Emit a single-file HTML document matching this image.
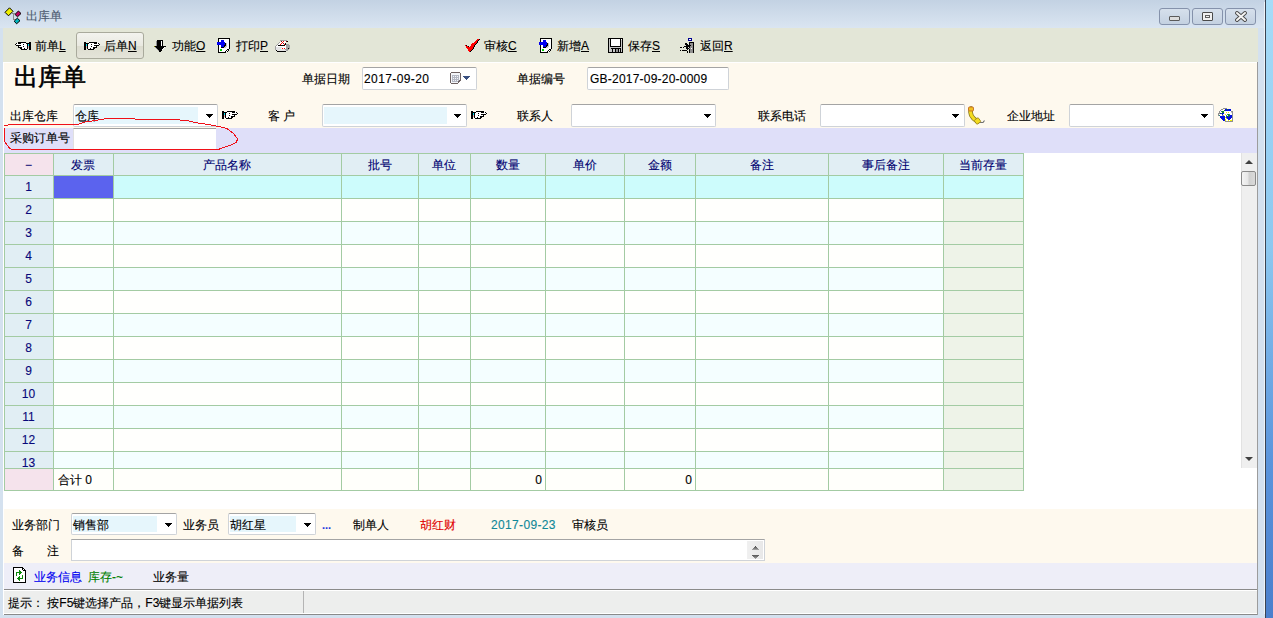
<!DOCTYPE html><html><head><meta charset="utf-8"><style>
*{box-sizing:border-box;margin:0;padding:0}
html,body{width:1273px;height:618px;overflow:hidden}
body{position:relative;font-family:"Liberation Sans",sans-serif;font-size:12px;color:#000;background:#d4e1ef}
.a{position:absolute}
.t{position:absolute;white-space:nowrap;line-height:14px;-webkit-text-stroke:0.12px currentColor}
.u{text-decoration:underline}
.box{position:absolute;background:#fff;border:1px solid #cfd3d8;border-top-color:#a4a4a4;border-radius:2px}
.inner{position:absolute;background:#e6f6fc}
.arr{position:absolute;width:0;height:0;border-left:4px solid transparent;border-right:4px solid transparent;border-top:4px solid #000}
.wb{position:absolute;top:8px;width:31px;height:17px;border:1px solid #8592ab;border-radius:3px;background:linear-gradient(#d6e0ec,#c4d1e1)}
</style></head><body>
<div class="a" style="left:0px;top:0px;width:1265px;height:28px;background:linear-gradient(#c3d2e3,#dae5f1);"></div>
<div class="a" style="left:1265px;top:0px;width:1px;height:618px;background:#3b4452;"></div>
<div class="a" style="left:1264px;top:2px;width:1px;height:612px;background:#eef3f8;"></div>
<div class="a" style="left:1266px;top:0px;width:7px;height:618px;background:linear-gradient(#a6dcf8 0%,#8cc8f0 40%,#5a94dc 75%,#4a7fcc 100%);"></div>
<div class="wb" style="left:1159px"></div>
<div class="wb" style="left:1192px"></div>
<div class="wb" style="left:1225px"></div>
<div class="t" style="left:26px;top:9px;color:#4c5a70">出库单</div>
<div class="a" style="left:3px;top:28px;width:1255px;height:34px;background:#e3e6d7;"></div>
<div class="a" style="left:3px;top:62px;width:1255px;height:66px;background:#fef9ee;"></div>
<div class="a" style="left:3px;top:128px;width:1255px;height:25px;background:#dfdff9;"></div>
<div class="a" style="left:3px;top:153px;width:1255px;height:356px;background:#fff;"></div>
<div class="a" style="left:3px;top:509px;width:1255px;height:54px;background:#fef9ee;"></div>
<div class="a" style="left:3px;top:563px;width:1255px;height:26px;background:#eeeef8;"></div>
<div class="a" style="left:3px;top:589px;width:1255px;height:26px;background:#edeeed;border-top:1px solid #8a8a8a;border-bottom:1px solid #8a8a8a;box-shadow:inset 0 1px 0 #fff,inset 0 -1px 0 #fff"></div>
<div class="a" style="left:303px;top:591px;width:1px;height:22px;background:#b4b4b4;"></div>
<div class="a" style="left:1257px;top:62px;width:1px;height:553px;background:#9c9c9c;"></div>
<div class="a" style="left:3px;top:62px;width:1254px;height:1px;background:#ffffff;"></div>
<div class="a" style="left:3px;top:62px;width:1px;height:553px;background:#ffffff;"></div>
<div class="a" style="left:4px;top:153px;width:49px;height:22px;background:#f5e3ec;"></div>
<div class="a" style="left:53px;top:153px;width:60px;height:22px;background:#e1eef4;"></div>
<div class="a" style="left:113px;top:153px;width:228px;height:22px;background:#e1eef4;"></div>
<div class="a" style="left:341px;top:153px;width:77px;height:22px;background:#e1eef4;"></div>
<div class="a" style="left:418px;top:153px;width:52px;height:22px;background:#e1eef4;"></div>
<div class="a" style="left:470px;top:153px;width:75px;height:22px;background:#e1eef4;"></div>
<div class="a" style="left:545px;top:153px;width:79px;height:22px;background:#e1eef4;"></div>
<div class="a" style="left:624px;top:153px;width:71px;height:22px;background:#e1eef4;"></div>
<div class="a" style="left:695px;top:153px;width:133px;height:22px;background:#e1eef4;"></div>
<div class="a" style="left:828px;top:153px;width:115px;height:22px;background:#e1eef4;"></div>
<div class="a" style="left:943px;top:153px;width:80px;height:22px;background:#e1eef4;"></div>
<div class="a" style="left:4px;top:175px;width:49px;height:23px;background:#e1eef4;"></div>
<div class="a" style="left:53px;top:175px;width:60px;height:23px;background:#5b63ee;"></div>
<div class="a" style="left:113px;top:175px;width:228px;height:23px;background:#cdfcfc;"></div>
<div class="a" style="left:341px;top:175px;width:77px;height:23px;background:#cdfcfc;"></div>
<div class="a" style="left:418px;top:175px;width:52px;height:23px;background:#cdfcfc;"></div>
<div class="a" style="left:470px;top:175px;width:75px;height:23px;background:#cdfcfc;"></div>
<div class="a" style="left:545px;top:175px;width:79px;height:23px;background:#cdfcfc;"></div>
<div class="a" style="left:624px;top:175px;width:71px;height:23px;background:#cdfcfc;"></div>
<div class="a" style="left:695px;top:175px;width:133px;height:23px;background:#cdfcfc;"></div>
<div class="a" style="left:828px;top:175px;width:115px;height:23px;background:#cdfcfc;"></div>
<div class="a" style="left:943px;top:175px;width:80px;height:23px;background:#cdfcfc;"></div>
<div class="a" style="left:4px;top:198px;width:49px;height:23px;background:#e1eef4;"></div>
<div class="a" style="left:53px;top:198px;width:60px;height:23px;background:#fffffd;"></div>
<div class="a" style="left:113px;top:198px;width:228px;height:23px;background:#fffffd;"></div>
<div class="a" style="left:341px;top:198px;width:77px;height:23px;background:#fffffd;"></div>
<div class="a" style="left:418px;top:198px;width:52px;height:23px;background:#fffffd;"></div>
<div class="a" style="left:470px;top:198px;width:75px;height:23px;background:#fffffd;"></div>
<div class="a" style="left:545px;top:198px;width:79px;height:23px;background:#fffffd;"></div>
<div class="a" style="left:624px;top:198px;width:71px;height:23px;background:#fffffd;"></div>
<div class="a" style="left:695px;top:198px;width:133px;height:23px;background:#fffffd;"></div>
<div class="a" style="left:828px;top:198px;width:115px;height:23px;background:#fffffd;"></div>
<div class="a" style="left:943px;top:198px;width:80px;height:23px;background:#eef3e8;"></div>
<div class="a" style="left:4px;top:221px;width:49px;height:23px;background:#e1eef4;"></div>
<div class="a" style="left:53px;top:221px;width:60px;height:23px;background:#f4feff;"></div>
<div class="a" style="left:113px;top:221px;width:228px;height:23px;background:#f4feff;"></div>
<div class="a" style="left:341px;top:221px;width:77px;height:23px;background:#f4feff;"></div>
<div class="a" style="left:418px;top:221px;width:52px;height:23px;background:#f4feff;"></div>
<div class="a" style="left:470px;top:221px;width:75px;height:23px;background:#f4feff;"></div>
<div class="a" style="left:545px;top:221px;width:79px;height:23px;background:#f4feff;"></div>
<div class="a" style="left:624px;top:221px;width:71px;height:23px;background:#f4feff;"></div>
<div class="a" style="left:695px;top:221px;width:133px;height:23px;background:#f4feff;"></div>
<div class="a" style="left:828px;top:221px;width:115px;height:23px;background:#f4feff;"></div>
<div class="a" style="left:943px;top:221px;width:80px;height:23px;background:#eef3e8;"></div>
<div class="a" style="left:4px;top:244px;width:49px;height:23px;background:#e1eef4;"></div>
<div class="a" style="left:53px;top:244px;width:60px;height:23px;background:#fffffd;"></div>
<div class="a" style="left:113px;top:244px;width:228px;height:23px;background:#fffffd;"></div>
<div class="a" style="left:341px;top:244px;width:77px;height:23px;background:#fffffd;"></div>
<div class="a" style="left:418px;top:244px;width:52px;height:23px;background:#fffffd;"></div>
<div class="a" style="left:470px;top:244px;width:75px;height:23px;background:#fffffd;"></div>
<div class="a" style="left:545px;top:244px;width:79px;height:23px;background:#fffffd;"></div>
<div class="a" style="left:624px;top:244px;width:71px;height:23px;background:#fffffd;"></div>
<div class="a" style="left:695px;top:244px;width:133px;height:23px;background:#fffffd;"></div>
<div class="a" style="left:828px;top:244px;width:115px;height:23px;background:#fffffd;"></div>
<div class="a" style="left:943px;top:244px;width:80px;height:23px;background:#eef3e8;"></div>
<div class="a" style="left:4px;top:267px;width:49px;height:23px;background:#e1eef4;"></div>
<div class="a" style="left:53px;top:267px;width:60px;height:23px;background:#f4feff;"></div>
<div class="a" style="left:113px;top:267px;width:228px;height:23px;background:#f4feff;"></div>
<div class="a" style="left:341px;top:267px;width:77px;height:23px;background:#f4feff;"></div>
<div class="a" style="left:418px;top:267px;width:52px;height:23px;background:#f4feff;"></div>
<div class="a" style="left:470px;top:267px;width:75px;height:23px;background:#f4feff;"></div>
<div class="a" style="left:545px;top:267px;width:79px;height:23px;background:#f4feff;"></div>
<div class="a" style="left:624px;top:267px;width:71px;height:23px;background:#f4feff;"></div>
<div class="a" style="left:695px;top:267px;width:133px;height:23px;background:#f4feff;"></div>
<div class="a" style="left:828px;top:267px;width:115px;height:23px;background:#f4feff;"></div>
<div class="a" style="left:943px;top:267px;width:80px;height:23px;background:#eef3e8;"></div>
<div class="a" style="left:4px;top:290px;width:49px;height:23px;background:#e1eef4;"></div>
<div class="a" style="left:53px;top:290px;width:60px;height:23px;background:#fffffd;"></div>
<div class="a" style="left:113px;top:290px;width:228px;height:23px;background:#fffffd;"></div>
<div class="a" style="left:341px;top:290px;width:77px;height:23px;background:#fffffd;"></div>
<div class="a" style="left:418px;top:290px;width:52px;height:23px;background:#fffffd;"></div>
<div class="a" style="left:470px;top:290px;width:75px;height:23px;background:#fffffd;"></div>
<div class="a" style="left:545px;top:290px;width:79px;height:23px;background:#fffffd;"></div>
<div class="a" style="left:624px;top:290px;width:71px;height:23px;background:#fffffd;"></div>
<div class="a" style="left:695px;top:290px;width:133px;height:23px;background:#fffffd;"></div>
<div class="a" style="left:828px;top:290px;width:115px;height:23px;background:#fffffd;"></div>
<div class="a" style="left:943px;top:290px;width:80px;height:23px;background:#eef3e8;"></div>
<div class="a" style="left:4px;top:313px;width:49px;height:23px;background:#e1eef4;"></div>
<div class="a" style="left:53px;top:313px;width:60px;height:23px;background:#f4feff;"></div>
<div class="a" style="left:113px;top:313px;width:228px;height:23px;background:#f4feff;"></div>
<div class="a" style="left:341px;top:313px;width:77px;height:23px;background:#f4feff;"></div>
<div class="a" style="left:418px;top:313px;width:52px;height:23px;background:#f4feff;"></div>
<div class="a" style="left:470px;top:313px;width:75px;height:23px;background:#f4feff;"></div>
<div class="a" style="left:545px;top:313px;width:79px;height:23px;background:#f4feff;"></div>
<div class="a" style="left:624px;top:313px;width:71px;height:23px;background:#f4feff;"></div>
<div class="a" style="left:695px;top:313px;width:133px;height:23px;background:#f4feff;"></div>
<div class="a" style="left:828px;top:313px;width:115px;height:23px;background:#f4feff;"></div>
<div class="a" style="left:943px;top:313px;width:80px;height:23px;background:#eef3e8;"></div>
<div class="a" style="left:4px;top:336px;width:49px;height:23px;background:#e1eef4;"></div>
<div class="a" style="left:53px;top:336px;width:60px;height:23px;background:#fffffd;"></div>
<div class="a" style="left:113px;top:336px;width:228px;height:23px;background:#fffffd;"></div>
<div class="a" style="left:341px;top:336px;width:77px;height:23px;background:#fffffd;"></div>
<div class="a" style="left:418px;top:336px;width:52px;height:23px;background:#fffffd;"></div>
<div class="a" style="left:470px;top:336px;width:75px;height:23px;background:#fffffd;"></div>
<div class="a" style="left:545px;top:336px;width:79px;height:23px;background:#fffffd;"></div>
<div class="a" style="left:624px;top:336px;width:71px;height:23px;background:#fffffd;"></div>
<div class="a" style="left:695px;top:336px;width:133px;height:23px;background:#fffffd;"></div>
<div class="a" style="left:828px;top:336px;width:115px;height:23px;background:#fffffd;"></div>
<div class="a" style="left:943px;top:336px;width:80px;height:23px;background:#eef3e8;"></div>
<div class="a" style="left:4px;top:359px;width:49px;height:23px;background:#e1eef4;"></div>
<div class="a" style="left:53px;top:359px;width:60px;height:23px;background:#f4feff;"></div>
<div class="a" style="left:113px;top:359px;width:228px;height:23px;background:#f4feff;"></div>
<div class="a" style="left:341px;top:359px;width:77px;height:23px;background:#f4feff;"></div>
<div class="a" style="left:418px;top:359px;width:52px;height:23px;background:#f4feff;"></div>
<div class="a" style="left:470px;top:359px;width:75px;height:23px;background:#f4feff;"></div>
<div class="a" style="left:545px;top:359px;width:79px;height:23px;background:#f4feff;"></div>
<div class="a" style="left:624px;top:359px;width:71px;height:23px;background:#f4feff;"></div>
<div class="a" style="left:695px;top:359px;width:133px;height:23px;background:#f4feff;"></div>
<div class="a" style="left:828px;top:359px;width:115px;height:23px;background:#f4feff;"></div>
<div class="a" style="left:943px;top:359px;width:80px;height:23px;background:#eef3e8;"></div>
<div class="a" style="left:4px;top:382px;width:49px;height:23px;background:#e1eef4;"></div>
<div class="a" style="left:53px;top:382px;width:60px;height:23px;background:#fffffd;"></div>
<div class="a" style="left:113px;top:382px;width:228px;height:23px;background:#fffffd;"></div>
<div class="a" style="left:341px;top:382px;width:77px;height:23px;background:#fffffd;"></div>
<div class="a" style="left:418px;top:382px;width:52px;height:23px;background:#fffffd;"></div>
<div class="a" style="left:470px;top:382px;width:75px;height:23px;background:#fffffd;"></div>
<div class="a" style="left:545px;top:382px;width:79px;height:23px;background:#fffffd;"></div>
<div class="a" style="left:624px;top:382px;width:71px;height:23px;background:#fffffd;"></div>
<div class="a" style="left:695px;top:382px;width:133px;height:23px;background:#fffffd;"></div>
<div class="a" style="left:828px;top:382px;width:115px;height:23px;background:#fffffd;"></div>
<div class="a" style="left:943px;top:382px;width:80px;height:23px;background:#eef3e8;"></div>
<div class="a" style="left:4px;top:405px;width:49px;height:23px;background:#e1eef4;"></div>
<div class="a" style="left:53px;top:405px;width:60px;height:23px;background:#f4feff;"></div>
<div class="a" style="left:113px;top:405px;width:228px;height:23px;background:#f4feff;"></div>
<div class="a" style="left:341px;top:405px;width:77px;height:23px;background:#f4feff;"></div>
<div class="a" style="left:418px;top:405px;width:52px;height:23px;background:#f4feff;"></div>
<div class="a" style="left:470px;top:405px;width:75px;height:23px;background:#f4feff;"></div>
<div class="a" style="left:545px;top:405px;width:79px;height:23px;background:#f4feff;"></div>
<div class="a" style="left:624px;top:405px;width:71px;height:23px;background:#f4feff;"></div>
<div class="a" style="left:695px;top:405px;width:133px;height:23px;background:#f4feff;"></div>
<div class="a" style="left:828px;top:405px;width:115px;height:23px;background:#f4feff;"></div>
<div class="a" style="left:943px;top:405px;width:80px;height:23px;background:#eef3e8;"></div>
<div class="a" style="left:4px;top:428px;width:49px;height:23px;background:#e1eef4;"></div>
<div class="a" style="left:53px;top:428px;width:60px;height:23px;background:#fffffd;"></div>
<div class="a" style="left:113px;top:428px;width:228px;height:23px;background:#fffffd;"></div>
<div class="a" style="left:341px;top:428px;width:77px;height:23px;background:#fffffd;"></div>
<div class="a" style="left:418px;top:428px;width:52px;height:23px;background:#fffffd;"></div>
<div class="a" style="left:470px;top:428px;width:75px;height:23px;background:#fffffd;"></div>
<div class="a" style="left:545px;top:428px;width:79px;height:23px;background:#fffffd;"></div>
<div class="a" style="left:624px;top:428px;width:71px;height:23px;background:#fffffd;"></div>
<div class="a" style="left:695px;top:428px;width:133px;height:23px;background:#fffffd;"></div>
<div class="a" style="left:828px;top:428px;width:115px;height:23px;background:#fffffd;"></div>
<div class="a" style="left:943px;top:428px;width:80px;height:23px;background:#eef3e8;"></div>
<div class="a" style="left:4px;top:451px;width:49px;height:17px;background:#e1eef4;"></div>
<div class="a" style="left:53px;top:451px;width:60px;height:17px;background:#f4feff;"></div>
<div class="a" style="left:113px;top:451px;width:228px;height:17px;background:#f4feff;"></div>
<div class="a" style="left:341px;top:451px;width:77px;height:17px;background:#f4feff;"></div>
<div class="a" style="left:418px;top:451px;width:52px;height:17px;background:#f4feff;"></div>
<div class="a" style="left:470px;top:451px;width:75px;height:17px;background:#f4feff;"></div>
<div class="a" style="left:545px;top:451px;width:79px;height:17px;background:#f4feff;"></div>
<div class="a" style="left:624px;top:451px;width:71px;height:17px;background:#f4feff;"></div>
<div class="a" style="left:695px;top:451px;width:133px;height:17px;background:#f4feff;"></div>
<div class="a" style="left:828px;top:451px;width:115px;height:17px;background:#f4feff;"></div>
<div class="a" style="left:943px;top:451px;width:80px;height:17px;background:#eef3e8;"></div>
<div class="a" style="left:4px;top:468px;width:49px;height:22px;background:#f5e3ec;"></div>
<div class="a" style="left:53px;top:468px;width:60px;height:22px;background:#fffffb;"></div>
<div class="a" style="left:113px;top:468px;width:228px;height:22px;background:#fffffb;"></div>
<div class="a" style="left:341px;top:468px;width:77px;height:22px;background:#fffffb;"></div>
<div class="a" style="left:418px;top:468px;width:52px;height:22px;background:#fffffb;"></div>
<div class="a" style="left:470px;top:468px;width:75px;height:22px;background:#fffffb;"></div>
<div class="a" style="left:545px;top:468px;width:79px;height:22px;background:#fffffb;"></div>
<div class="a" style="left:624px;top:468px;width:71px;height:22px;background:#fffffb;"></div>
<div class="a" style="left:695px;top:468px;width:133px;height:22px;background:#fffffb;"></div>
<div class="a" style="left:828px;top:468px;width:115px;height:22px;background:#fffffb;"></div>
<div class="a" style="left:943px;top:468px;width:80px;height:22px;background:#eef3e8;"></div>
<div class="a" style="left:4px;top:153px;width:1px;height:338px;background:#a3cba3;"></div>
<div class="a" style="left:53px;top:153px;width:1px;height:338px;background:#a3cba3;"></div>
<div class="a" style="left:113px;top:153px;width:1px;height:338px;background:#a3cba3;"></div>
<div class="a" style="left:341px;top:153px;width:1px;height:338px;background:#a3cba3;"></div>
<div class="a" style="left:418px;top:153px;width:1px;height:338px;background:#a3cba3;"></div>
<div class="a" style="left:470px;top:153px;width:1px;height:338px;background:#a3cba3;"></div>
<div class="a" style="left:545px;top:153px;width:1px;height:338px;background:#a3cba3;"></div>
<div class="a" style="left:624px;top:153px;width:1px;height:338px;background:#a3cba3;"></div>
<div class="a" style="left:695px;top:153px;width:1px;height:338px;background:#a3cba3;"></div>
<div class="a" style="left:828px;top:153px;width:1px;height:338px;background:#a3cba3;"></div>
<div class="a" style="left:943px;top:153px;width:1px;height:338px;background:#a3cba3;"></div>
<div class="a" style="left:1023px;top:153px;width:1px;height:338px;background:#a3cba3;"></div>
<div class="a" style="left:4px;top:153px;width:1020px;height:1px;background:#a3cba3;"></div>
<div class="a" style="left:4px;top:175px;width:1020px;height:1px;background:#a3cba3;"></div>
<div class="a" style="left:4px;top:198px;width:1020px;height:1px;background:#a3cba3;"></div>
<div class="a" style="left:4px;top:221px;width:1020px;height:1px;background:#a3cba3;"></div>
<div class="a" style="left:4px;top:244px;width:1020px;height:1px;background:#a3cba3;"></div>
<div class="a" style="left:4px;top:267px;width:1020px;height:1px;background:#a3cba3;"></div>
<div class="a" style="left:4px;top:290px;width:1020px;height:1px;background:#a3cba3;"></div>
<div class="a" style="left:4px;top:313px;width:1020px;height:1px;background:#a3cba3;"></div>
<div class="a" style="left:4px;top:336px;width:1020px;height:1px;background:#a3cba3;"></div>
<div class="a" style="left:4px;top:359px;width:1020px;height:1px;background:#a3cba3;"></div>
<div class="a" style="left:4px;top:382px;width:1020px;height:1px;background:#a3cba3;"></div>
<div class="a" style="left:4px;top:405px;width:1020px;height:1px;background:#a3cba3;"></div>
<div class="a" style="left:4px;top:428px;width:1020px;height:1px;background:#a3cba3;"></div>
<div class="a" style="left:4px;top:451px;width:1020px;height:1px;background:#a3cba3;"></div>
<div class="a" style="left:4px;top:468px;width:1020px;height:1px;background:#a3cba3;"></div>
<div class="a" style="left:4px;top:490px;width:1020px;height:1px;background:#a3cba3;"></div>
<div class="t" style="left:4px;top:158px;width:49px;text-align:center;color:#000070">−</div>
<div class="t" style="left:53px;top:158px;width:60px;text-align:center;color:#000070">发票</div>
<div class="t" style="left:113px;top:158px;width:228px;text-align:center;color:#000070">产品名称</div>
<div class="t" style="left:341px;top:158px;width:77px;text-align:center;color:#000070">批号</div>
<div class="t" style="left:418px;top:158px;width:52px;text-align:center;color:#000070">单位</div>
<div class="t" style="left:470px;top:158px;width:75px;text-align:center;color:#000070">数量</div>
<div class="t" style="left:545px;top:158px;width:79px;text-align:center;color:#000070">单价</div>
<div class="t" style="left:624px;top:158px;width:71px;text-align:center;color:#000070">金额</div>
<div class="t" style="left:695px;top:158px;width:133px;text-align:center;color:#000070">备注</div>
<div class="t" style="left:828px;top:158px;width:115px;text-align:center;color:#000070">事后备注</div>
<div class="t" style="left:943px;top:158px;width:80px;text-align:center;color:#000070">当前存量</div>
<div class="t" style="left:4px;top:180px;width:49px;text-align:center;color:#08087a">1</div>
<div class="t" style="left:4px;top:203px;width:49px;text-align:center;color:#08087a">2</div>
<div class="t" style="left:4px;top:226px;width:49px;text-align:center;color:#08087a">3</div>
<div class="t" style="left:4px;top:249px;width:49px;text-align:center;color:#08087a">4</div>
<div class="t" style="left:4px;top:272px;width:49px;text-align:center;color:#08087a">5</div>
<div class="t" style="left:4px;top:295px;width:49px;text-align:center;color:#08087a">6</div>
<div class="t" style="left:4px;top:318px;width:49px;text-align:center;color:#08087a">7</div>
<div class="t" style="left:4px;top:341px;width:49px;text-align:center;color:#08087a">8</div>
<div class="t" style="left:4px;top:364px;width:49px;text-align:center;color:#08087a">9</div>
<div class="t" style="left:4px;top:387px;width:49px;text-align:center;color:#08087a">10</div>
<div class="t" style="left:4px;top:410px;width:49px;text-align:center;color:#08087a">11</div>
<div class="t" style="left:4px;top:433px;width:49px;text-align:center;color:#08087a">12</div>
<div class="t" style="left:4px;top:456px;width:49px;text-align:center;color:#08087a">13</div>
<div class="t" style="left:58px;top:473px;">合计 0</div>
<div class="t" style="left:470px;top:473px;width:72px;text-align:right">0</div>
<div class="t" style="left:624px;top:473px;width:68px;text-align:right">0</div>
<div class="a" style="left:76px;top:32px;width:68px;height:27px;border:1px solid #a9aa9c;border-radius:3px;background:linear-gradient(#f3f3ee 0%,#e9e9e1 50%,#dcdccf 51%,#e4e4d9 100%)"></div>
<svg class="a" style="left:15px;top:42px;" width="16" height="8" viewBox="0 0 16 8" shape-rendering="crispEdges"><rect x="3" y="0" width="8" height="1" fill="#000"/><rect x="14" y="0" width="2" height="1" fill="#000"/><rect x="1" y="1" width="1" height="1" fill="#000"/><rect x="2" y="1" width="1" height="1" fill="#fff"/><rect x="3" y="1" width="3" height="1" fill="#000"/><rect x="6" y="1" width="5" height="1" fill="#fff"/><rect x="11" y="1" width="5" height="1" fill="#000"/><rect x="0" y="2" width="1" height="1" fill="#000"/><rect x="1" y="2" width="7" height="1" fill="#fff"/><rect x="8" y="2" width="1" height="1" fill="#000"/><rect x="9" y="2" width="3" height="1" fill="#fff"/><rect x="12" y="2" width="1" height="1" fill="#000"/><rect x="13" y="2" width="1" height="1" fill="#00e0f0"/><rect x="14" y="2" width="2" height="1" fill="#000"/><rect x="1" y="3" width="5" height="1" fill="#000"/><rect x="6" y="3" width="6" height="1" fill="#fff"/><rect x="12" y="3" width="1" height="1" fill="#000"/><rect x="13" y="3" width="1" height="1" fill="#00e0f0"/><rect x="14" y="3" width="2" height="1" fill="#000"/><rect x="3" y="4" width="1" height="1" fill="#000"/><rect x="4" y="4" width="4" height="1" fill="#fff"/><rect x="8" y="4" width="1" height="1" fill="#000"/><rect x="9" y="4" width="3" height="1" fill="#fff"/><rect x="12" y="4" width="1" height="1" fill="#000"/><rect x="13" y="4" width="1" height="1" fill="#e0b0b0"/><rect x="14" y="4" width="2" height="1" fill="#000"/><rect x="3" y="5" width="4" height="1" fill="#000"/><rect x="7" y="5" width="5" height="1" fill="#fff"/><rect x="12" y="5" width="1" height="1" fill="#000"/><rect x="13" y="5" width="1" height="1" fill="#e0b0b0"/><rect x="14" y="5" width="2" height="1" fill="#000"/><rect x="5" y="6" width="2" height="1" fill="#000"/><rect x="7" y="6" width="2" height="1" fill="#fff"/><rect x="9" y="6" width="1" height="1" fill="#000"/><rect x="10" y="6" width="2" height="1" fill="#fff"/><rect x="12" y="6" width="1" height="1" fill="#000"/><rect x="14" y="6" width="2" height="1" fill="#000"/><rect x="6" y="7" width="6" height="1" fill="#000"/><rect x="14" y="7" width="2" height="1" fill="#000"/></svg>
<svg class="a" style="left:84px;top:42px;" width="16" height="8" viewBox="0 0 16 8" shape-rendering="crispEdges"><rect x="0" y="0" width="2" height="1" fill="#000"/><rect x="5" y="0" width="8" height="1" fill="#000"/><rect x="0" y="1" width="5" height="1" fill="#000"/><rect x="5" y="1" width="5" height="1" fill="#fff"/><rect x="10" y="1" width="3" height="1" fill="#000"/><rect x="13" y="1" width="1" height="1" fill="#fff"/><rect x="14" y="1" width="1" height="1" fill="#000"/><rect x="0" y="2" width="2" height="1" fill="#000"/><rect x="2" y="2" width="1" height="1" fill="#00e0f0"/><rect x="3" y="2" width="1" height="1" fill="#000"/><rect x="4" y="2" width="3" height="1" fill="#fff"/><rect x="7" y="2" width="1" height="1" fill="#000"/><rect x="8" y="2" width="7" height="1" fill="#fff"/><rect x="15" y="2" width="1" height="1" fill="#000"/><rect x="0" y="3" width="2" height="1" fill="#000"/><rect x="2" y="3" width="1" height="1" fill="#00e0f0"/><rect x="3" y="3" width="1" height="1" fill="#000"/><rect x="4" y="3" width="6" height="1" fill="#fff"/><rect x="10" y="3" width="5" height="1" fill="#000"/><rect x="0" y="4" width="2" height="1" fill="#000"/><rect x="2" y="4" width="1" height="1" fill="#e0b0b0"/><rect x="3" y="4" width="1" height="1" fill="#000"/><rect x="4" y="4" width="3" height="1" fill="#fff"/><rect x="7" y="4" width="1" height="1" fill="#000"/><rect x="8" y="4" width="4" height="1" fill="#fff"/><rect x="12" y="4" width="1" height="1" fill="#000"/><rect x="0" y="5" width="2" height="1" fill="#000"/><rect x="2" y="5" width="1" height="1" fill="#e0b0b0"/><rect x="3" y="5" width="1" height="1" fill="#000"/><rect x="4" y="5" width="5" height="1" fill="#fff"/><rect x="9" y="5" width="4" height="1" fill="#000"/><rect x="0" y="6" width="2" height="1" fill="#000"/><rect x="3" y="6" width="1" height="1" fill="#000"/><rect x="4" y="6" width="2" height="1" fill="#fff"/><rect x="6" y="6" width="1" height="1" fill="#000"/><rect x="7" y="6" width="2" height="1" fill="#fff"/><rect x="9" y="6" width="2" height="1" fill="#000"/><rect x="0" y="7" width="2" height="1" fill="#000"/><rect x="4" y="7" width="6" height="1" fill="#000"/></svg>
<svg class="a" style="left:154px;top:40px;" width="12" height="12" viewBox="0 0 12 12" shape-rendering="crispEdges"><rect x="3" y="0" width="6" height="1" fill="#000"/><rect x="2" y="1" width="1" height="1" fill="#909090"/><rect x="3" y="1" width="4" height="1" fill="#000"/><rect x="7" y="1" width="1" height="1" fill="#fff"/><rect x="8" y="1" width="1" height="1" fill="#000"/><rect x="2" y="2" width="1" height="1" fill="#909090"/><rect x="3" y="2" width="4" height="1" fill="#000"/><rect x="7" y="2" width="1" height="1" fill="#fff"/><rect x="8" y="2" width="1" height="1" fill="#000"/><rect x="2" y="3" width="1" height="1" fill="#909090"/><rect x="3" y="3" width="4" height="1" fill="#000"/><rect x="7" y="3" width="1" height="1" fill="#fff"/><rect x="8" y="3" width="1" height="1" fill="#000"/><rect x="2" y="4" width="1" height="1" fill="#909090"/><rect x="3" y="4" width="4" height="1" fill="#000"/><rect x="7" y="4" width="1" height="1" fill="#fff"/><rect x="8" y="4" width="1" height="1" fill="#000"/><rect x="2" y="5" width="1" height="1" fill="#909090"/><rect x="3" y="5" width="4" height="1" fill="#000"/><rect x="7" y="5" width="1" height="1" fill="#fff"/><rect x="8" y="5" width="1" height="1" fill="#000"/><rect x="0" y="6" width="1" height="1" fill="#808000"/><rect x="1" y="6" width="11" height="1" fill="#000"/><rect x="1" y="7" width="1" height="1" fill="#909090"/><rect x="2" y="7" width="8" height="1" fill="#000"/><rect x="10" y="7" width="1" height="1" fill="#fff"/><rect x="2" y="8" width="1" height="1" fill="#909090"/><rect x="3" y="8" width="6" height="1" fill="#000"/><rect x="9" y="8" width="1" height="1" fill="#fff"/><rect x="3" y="9" width="1" height="1" fill="#909090"/><rect x="4" y="9" width="4" height="1" fill="#000"/><rect x="8" y="9" width="1" height="1" fill="#fff"/><rect x="4" y="10" width="1" height="1" fill="#909090"/><rect x="5" y="10" width="3" height="1" fill="#000"/><rect x="5" y="11" width="2" height="1" fill="#000"/></svg>
<svg class="a" style="left:216px;top:38px;" width="14" height="15" viewBox="0 0 14 15" shape-rendering="crispEdges"><rect x="2" y="0" width="12" height="1" fill="#000"/><rect x="2" y="1" width="1" height="1" fill="#000"/><rect x="3" y="1" width="10" height="1" fill="#fff"/><rect x="13" y="1" width="1" height="1" fill="#000"/><rect x="2" y="2" width="1" height="1" fill="#000"/><rect x="3" y="2" width="2" height="1" fill="#fff"/><rect x="5" y="2" width="3" height="1" fill="#0000f0"/><rect x="8" y="2" width="5" height="1" fill="#fff"/><rect x="13" y="2" width="1" height="1" fill="#000"/><rect x="2" y="3" width="1" height="1" fill="#000"/><rect x="3" y="3" width="2" height="1" fill="#fff"/><rect x="5" y="3" width="3" height="1" fill="#0000f0"/><rect x="8" y="3" width="5" height="1" fill="#fff"/><rect x="13" y="3" width="1" height="1" fill="#000"/><rect x="1" y="4" width="8" height="1" fill="#0000f0"/><rect x="9" y="4" width="4" height="1" fill="#fff"/><rect x="13" y="4" width="1" height="1" fill="#000"/><rect x="1" y="5" width="8" height="1" fill="#0000f0"/><rect x="9" y="5" width="1" height="1" fill="#000"/><rect x="10" y="5" width="1" height="1" fill="#c8c8c8"/><rect x="11" y="5" width="2" height="1" fill="#fff"/><rect x="13" y="5" width="1" height="1" fill="#000"/><rect x="1" y="6" width="8" height="1" fill="#0000f0"/><rect x="9" y="6" width="1" height="1" fill="#000"/><rect x="10" y="6" width="1" height="1" fill="#c8c8c8"/><rect x="11" y="6" width="2" height="1" fill="#fff"/><rect x="13" y="6" width="1" height="1" fill="#000"/><rect x="2" y="7" width="1" height="1" fill="#000"/><rect x="3" y="7" width="2" height="1" fill="#fff"/><rect x="5" y="7" width="3" height="1" fill="#0000f0"/><rect x="8" y="7" width="2" height="1" fill="#000"/><rect x="10" y="7" width="1" height="1" fill="#c8c8c8"/><rect x="11" y="7" width="2" height="1" fill="#fff"/><rect x="13" y="7" width="1" height="1" fill="#000"/><rect x="2" y="8" width="1" height="1" fill="#000"/><rect x="3" y="8" width="2" height="1" fill="#fff"/><rect x="5" y="8" width="3" height="1" fill="#0000f0"/><rect x="8" y="8" width="1" height="1" fill="#000"/><rect x="9" y="8" width="2" height="1" fill="#c8c8c8"/><rect x="11" y="8" width="2" height="1" fill="#fff"/><rect x="13" y="8" width="1" height="1" fill="#000"/><rect x="2" y="9" width="1" height="1" fill="#000"/><rect x="3" y="9" width="2" height="1" fill="#fff"/><rect x="5" y="9" width="3" height="1" fill="#000"/><rect x="8" y="9" width="2" height="1" fill="#c8c8c8"/><rect x="10" y="9" width="3" height="1" fill="#fff"/><rect x="13" y="9" width="1" height="1" fill="#000"/><rect x="2" y="10" width="1" height="1" fill="#000"/><rect x="3" y="10" width="10" height="1" fill="#fff"/><rect x="13" y="10" width="1" height="1" fill="#000"/><rect x="2" y="11" width="1" height="1" fill="#000"/><rect x="3" y="11" width="1" height="1" fill="#fff"/><rect x="4" y="11" width="2" height="1" fill="#00d000"/><rect x="6" y="11" width="5" height="1" fill="#fff"/><rect x="11" y="11" width="2" height="1" fill="#000"/><rect x="2" y="12" width="1" height="1" fill="#000"/><rect x="3" y="12" width="1" height="1" fill="#fff"/><rect x="4" y="12" width="2" height="1" fill="#00d000"/><rect x="6" y="12" width="4" height="1" fill="#fff"/><rect x="10" y="12" width="1" height="1" fill="#000"/><rect x="11" y="12" width="1" height="1" fill="#fff"/><rect x="12" y="12" width="1" height="1" fill="#000"/><rect x="2" y="13" width="1" height="1" fill="#000"/><rect x="3" y="13" width="6" height="1" fill="#fff"/><rect x="9" y="13" width="1" height="1" fill="#000"/><rect x="10" y="13" width="1" height="1" fill="#fff"/><rect x="11" y="13" width="1" height="1" fill="#000"/><rect x="2" y="14" width="8" height="1" fill="#000"/></svg>
<svg class="a" style="left:538px;top:38px;" width="14" height="15" viewBox="0 0 14 15" shape-rendering="crispEdges"><rect x="2" y="0" width="12" height="1" fill="#000"/><rect x="2" y="1" width="1" height="1" fill="#000"/><rect x="3" y="1" width="10" height="1" fill="#fff"/><rect x="13" y="1" width="1" height="1" fill="#000"/><rect x="2" y="2" width="1" height="1" fill="#000"/><rect x="3" y="2" width="2" height="1" fill="#fff"/><rect x="5" y="2" width="3" height="1" fill="#0000f0"/><rect x="8" y="2" width="5" height="1" fill="#fff"/><rect x="13" y="2" width="1" height="1" fill="#000"/><rect x="2" y="3" width="1" height="1" fill="#000"/><rect x="3" y="3" width="2" height="1" fill="#fff"/><rect x="5" y="3" width="3" height="1" fill="#0000f0"/><rect x="8" y="3" width="5" height="1" fill="#fff"/><rect x="13" y="3" width="1" height="1" fill="#000"/><rect x="1" y="4" width="8" height="1" fill="#0000f0"/><rect x="9" y="4" width="4" height="1" fill="#fff"/><rect x="13" y="4" width="1" height="1" fill="#000"/><rect x="1" y="5" width="8" height="1" fill="#0000f0"/><rect x="9" y="5" width="1" height="1" fill="#000"/><rect x="10" y="5" width="1" height="1" fill="#c8c8c8"/><rect x="11" y="5" width="2" height="1" fill="#fff"/><rect x="13" y="5" width="1" height="1" fill="#000"/><rect x="1" y="6" width="8" height="1" fill="#0000f0"/><rect x="9" y="6" width="1" height="1" fill="#000"/><rect x="10" y="6" width="1" height="1" fill="#c8c8c8"/><rect x="11" y="6" width="2" height="1" fill="#fff"/><rect x="13" y="6" width="1" height="1" fill="#000"/><rect x="2" y="7" width="1" height="1" fill="#000"/><rect x="3" y="7" width="2" height="1" fill="#fff"/><rect x="5" y="7" width="3" height="1" fill="#0000f0"/><rect x="8" y="7" width="2" height="1" fill="#000"/><rect x="10" y="7" width="1" height="1" fill="#c8c8c8"/><rect x="11" y="7" width="2" height="1" fill="#fff"/><rect x="13" y="7" width="1" height="1" fill="#000"/><rect x="2" y="8" width="1" height="1" fill="#000"/><rect x="3" y="8" width="2" height="1" fill="#fff"/><rect x="5" y="8" width="3" height="1" fill="#0000f0"/><rect x="8" y="8" width="1" height="1" fill="#000"/><rect x="9" y="8" width="2" height="1" fill="#c8c8c8"/><rect x="11" y="8" width="2" height="1" fill="#fff"/><rect x="13" y="8" width="1" height="1" fill="#000"/><rect x="2" y="9" width="1" height="1" fill="#000"/><rect x="3" y="9" width="2" height="1" fill="#fff"/><rect x="5" y="9" width="3" height="1" fill="#000"/><rect x="8" y="9" width="2" height="1" fill="#c8c8c8"/><rect x="10" y="9" width="3" height="1" fill="#fff"/><rect x="13" y="9" width="1" height="1" fill="#000"/><rect x="2" y="10" width="1" height="1" fill="#000"/><rect x="3" y="10" width="10" height="1" fill="#fff"/><rect x="13" y="10" width="1" height="1" fill="#000"/><rect x="2" y="11" width="1" height="1" fill="#000"/><rect x="3" y="11" width="1" height="1" fill="#fff"/><rect x="4" y="11" width="2" height="1" fill="#00d000"/><rect x="6" y="11" width="5" height="1" fill="#fff"/><rect x="11" y="11" width="2" height="1" fill="#000"/><rect x="2" y="12" width="1" height="1" fill="#000"/><rect x="3" y="12" width="1" height="1" fill="#fff"/><rect x="4" y="12" width="2" height="1" fill="#00d000"/><rect x="6" y="12" width="4" height="1" fill="#fff"/><rect x="10" y="12" width="1" height="1" fill="#000"/><rect x="11" y="12" width="1" height="1" fill="#fff"/><rect x="12" y="12" width="1" height="1" fill="#000"/><rect x="2" y="13" width="1" height="1" fill="#000"/><rect x="3" y="13" width="6" height="1" fill="#fff"/><rect x="9" y="13" width="1" height="1" fill="#000"/><rect x="10" y="13" width="1" height="1" fill="#fff"/><rect x="11" y="13" width="1" height="1" fill="#000"/><rect x="2" y="14" width="8" height="1" fill="#000"/></svg>
<svg class="a" style="left:275px;top:40px;" width="15" height="12" viewBox="0 0 15 12" shape-rendering="crispEdges"><rect x="5" y="0" width="7" height="1" fill="#a0a0a0"/><rect x="6" y="1" width="1" height="1" fill="#800000"/><rect x="7" y="1" width="1" height="1" fill="#fff"/><rect x="8" y="1" width="1" height="1" fill="#f00"/><rect x="9" y="1" width="2" height="1" fill="#fff"/><rect x="11" y="1" width="1" height="1" fill="#800000"/><rect x="12" y="1" width="1" height="1" fill="#000"/><rect x="4" y="2" width="1" height="1" fill="#a0a0a0"/><rect x="5" y="2" width="2" height="1" fill="#fff"/><rect x="7" y="2" width="1" height="1" fill="#f00"/><rect x="8" y="2" width="3" height="1" fill="#fff"/><rect x="3" y="3" width="1" height="1" fill="#a0a0a0"/><rect x="4" y="3" width="2" height="1" fill="#fff"/><rect x="6" y="3" width="1" height="1" fill="#f00"/><rect x="7" y="3" width="1" height="1" fill="#fff"/><rect x="8" y="3" width="1" height="1" fill="#800000"/><rect x="9" y="3" width="1" height="1" fill="#fff"/><rect x="10" y="3" width="1" height="1" fill="#000"/><rect x="2" y="4" width="1" height="1" fill="#a0a0a0"/><rect x="3" y="4" width="2" height="1" fill="#fff"/><rect x="5" y="4" width="1" height="1" fill="#f00"/><rect x="6" y="4" width="3" height="1" fill="#fff"/><rect x="9" y="4" width="1" height="1" fill="#f00"/><rect x="10" y="4" width="1" height="1" fill="#000"/><rect x="11" y="4" width="3" height="1" fill="#a0a0a0"/><rect x="1" y="5" width="1" height="1" fill="#a0a0a0"/><rect x="2" y="5" width="1" height="1" fill="#fff"/><rect x="3" y="5" width="7" height="1" fill="#000"/><rect x="10" y="5" width="1" height="1" fill="#fff"/><rect x="11" y="5" width="4" height="1" fill="#a0a0a0"/><rect x="0" y="6" width="1" height="1" fill="#a0a0a0"/><rect x="1" y="6" width="10" height="1" fill="#fff"/><rect x="11" y="6" width="4" height="1" fill="#a0a0a0"/><rect x="0" y="7" width="1" height="1" fill="#a0a0a0"/><rect x="1" y="7" width="6" height="1" fill="#e4e4e4"/><rect x="7" y="7" width="4" height="1" fill="#fff"/><rect x="11" y="7" width="4" height="1" fill="#a0a0a0"/><rect x="0" y="8" width="1" height="1" fill="#a0a0a0"/><rect x="1" y="8" width="5" height="1" fill="#e4e4e4"/><rect x="6" y="8" width="1" height="1" fill="#fff"/><rect x="7" y="8" width="1" height="1" fill="#f00"/><rect x="8" y="8" width="1" height="1" fill="#fff"/><rect x="9" y="8" width="1" height="1" fill="#f00"/><rect x="10" y="8" width="1" height="1" fill="#fff"/><rect x="11" y="8" width="2" height="1" fill="#a0a0a0"/><rect x="13" y="8" width="1" height="1" fill="#000"/><rect x="14" y="8" width="1" height="1" fill="#a0a0a0"/><rect x="0" y="9" width="1" height="1" fill="#a0a0a0"/><rect x="1" y="9" width="9" height="1" fill="#e4e4e4"/><rect x="10" y="9" width="4" height="1" fill="#a0a0a0"/><rect x="1" y="10" width="1" height="1" fill="#000"/><rect x="2" y="10" width="9" height="1" fill="#e4e4e4"/><rect x="11" y="10" width="2" height="1" fill="#a0a0a0"/><rect x="2" y="11" width="9" height="1" fill="#000"/></svg>
<svg class="a" style="left:464px;top:39px;" width="16" height="13" viewBox="0 0 16 13" shape-rendering="crispEdges"><rect x="13" y="0" width="2" height="1" fill="#ff0000"/><rect x="15" y="0" width="1" height="1" fill="#000"/><rect x="12" y="1" width="2" height="1" fill="#ff0000"/><rect x="14" y="1" width="1" height="1" fill="#000"/><rect x="11" y="2" width="2" height="1" fill="#ff0000"/><rect x="13" y="2" width="1" height="1" fill="#000"/><rect x="10" y="3" width="3" height="1" fill="#ff0000"/><rect x="13" y="3" width="1" height="1" fill="#000"/><rect x="8" y="4" width="4" height="1" fill="#ff0000"/><rect x="12" y="4" width="1" height="1" fill="#000"/><rect x="7" y="5" width="4" height="1" fill="#ff0000"/><rect x="11" y="5" width="1" height="1" fill="#000"/><rect x="1" y="6" width="1" height="1" fill="#ff0000"/><rect x="2" y="6" width="1" height="1" fill="#000"/><rect x="7" y="6" width="3" height="1" fill="#ff0000"/><rect x="10" y="6" width="1" height="1" fill="#000"/><rect x="2" y="7" width="2" height="1" fill="#ff0000"/><rect x="4" y="7" width="1" height="1" fill="#000"/><rect x="6" y="7" width="4" height="1" fill="#ff0000"/><rect x="10" y="7" width="1" height="1" fill="#000"/><rect x="2" y="8" width="7" height="1" fill="#ff0000"/><rect x="9" y="8" width="1" height="1" fill="#000"/><rect x="3" y="9" width="6" height="1" fill="#ff0000"/><rect x="9" y="9" width="1" height="1" fill="#000"/><rect x="4" y="10" width="4" height="1" fill="#ff0000"/><rect x="8" y="10" width="1" height="1" fill="#000"/><rect x="4" y="11" width="3" height="1" fill="#ff0000"/><rect x="7" y="11" width="1" height="1" fill="#000"/><rect x="5" y="12" width="1" height="1" fill="#ff0000"/><rect x="6" y="12" width="1" height="1" fill="#000"/></svg>
<svg class="a" style="left:608px;top:38px;" width="15" height="15" viewBox="0 0 15 15" shape-rendering="crispEdges"><rect x="0" y="0" width="15" height="1" fill="#000"/><rect x="0" y="1" width="1" height="1" fill="#000"/><rect x="1" y="1" width="1" height="1" fill="#c8c8c8"/><rect x="2" y="1" width="1" height="1" fill="#000"/><rect x="3" y="1" width="9" height="1" fill="#fff"/><rect x="12" y="1" width="1" height="1" fill="#000"/><rect x="13" y="1" width="1" height="1" fill="#fff"/><rect x="14" y="1" width="1" height="1" fill="#000"/><rect x="0" y="2" width="1" height="1" fill="#000"/><rect x="1" y="2" width="1" height="1" fill="#c8c8c8"/><rect x="2" y="2" width="1" height="1" fill="#000"/><rect x="3" y="2" width="9" height="1" fill="#fff"/><rect x="12" y="2" width="1" height="1" fill="#000"/><rect x="13" y="2" width="1" height="1" fill="#c8c8c8"/><rect x="14" y="2" width="1" height="1" fill="#000"/><rect x="0" y="3" width="1" height="1" fill="#000"/><rect x="1" y="3" width="1" height="1" fill="#c8c8c8"/><rect x="2" y="3" width="1" height="1" fill="#000"/><rect x="3" y="3" width="9" height="1" fill="#fff"/><rect x="12" y="3" width="1" height="1" fill="#000"/><rect x="13" y="3" width="1" height="1" fill="#c8c8c8"/><rect x="14" y="3" width="1" height="1" fill="#000"/><rect x="0" y="4" width="1" height="1" fill="#000"/><rect x="1" y="4" width="1" height="1" fill="#c8c8c8"/><rect x="2" y="4" width="1" height="1" fill="#000"/><rect x="3" y="4" width="9" height="1" fill="#fff"/><rect x="12" y="4" width="1" height="1" fill="#000"/><rect x="13" y="4" width="1" height="1" fill="#c8c8c8"/><rect x="14" y="4" width="1" height="1" fill="#000"/><rect x="0" y="5" width="1" height="1" fill="#000"/><rect x="1" y="5" width="1" height="1" fill="#c8c8c8"/><rect x="2" y="5" width="1" height="1" fill="#000"/><rect x="3" y="5" width="9" height="1" fill="#fff"/><rect x="12" y="5" width="1" height="1" fill="#000"/><rect x="13" y="5" width="1" height="1" fill="#c8c8c8"/><rect x="14" y="5" width="1" height="1" fill="#000"/><rect x="0" y="6" width="1" height="1" fill="#000"/><rect x="1" y="6" width="1" height="1" fill="#c8c8c8"/><rect x="2" y="6" width="1" height="1" fill="#000"/><rect x="3" y="6" width="9" height="1" fill="#fff"/><rect x="12" y="6" width="1" height="1" fill="#000"/><rect x="13" y="6" width="1" height="1" fill="#c8c8c8"/><rect x="14" y="6" width="1" height="1" fill="#000"/><rect x="0" y="7" width="1" height="1" fill="#000"/><rect x="1" y="7" width="1" height="1" fill="#c8c8c8"/><rect x="2" y="7" width="1" height="1" fill="#000"/><rect x="3" y="7" width="9" height="1" fill="#fff"/><rect x="12" y="7" width="1" height="1" fill="#000"/><rect x="13" y="7" width="1" height="1" fill="#c8c8c8"/><rect x="14" y="7" width="1" height="1" fill="#000"/><rect x="0" y="8" width="1" height="1" fill="#000"/><rect x="1" y="8" width="1" height="1" fill="#c8c8c8"/><rect x="2" y="8" width="11" height="1" fill="#000"/><rect x="13" y="8" width="1" height="1" fill="#c8c8c8"/><rect x="14" y="8" width="1" height="1" fill="#000"/><rect x="0" y="9" width="1" height="1" fill="#000"/><rect x="1" y="9" width="13" height="1" fill="#c8c8c8"/><rect x="14" y="9" width="1" height="1" fill="#000"/><rect x="0" y="10" width="1" height="1" fill="#000"/><rect x="1" y="10" width="2" height="1" fill="#c8c8c8"/><rect x="3" y="10" width="10" height="1" fill="#000"/><rect x="13" y="10" width="1" height="1" fill="#c8c8c8"/><rect x="14" y="10" width="1" height="1" fill="#000"/><rect x="0" y="11" width="1" height="1" fill="#000"/><rect x="1" y="11" width="3" height="1" fill="#c8c8c8"/><rect x="4" y="11" width="1" height="1" fill="#000"/><rect x="5" y="11" width="2" height="1" fill="#c8c8c8"/><rect x="7" y="11" width="1" height="1" fill="#000"/><rect x="8" y="11" width="2" height="1" fill="#909090"/><rect x="10" y="11" width="1" height="1" fill="#000"/><rect x="11" y="11" width="1" height="1" fill="#c8c8c8"/><rect x="12" y="11" width="1" height="1" fill="#000"/><rect x="13" y="11" width="1" height="1" fill="#c8c8c8"/><rect x="14" y="11" width="1" height="1" fill="#000"/><rect x="0" y="12" width="1" height="1" fill="#000"/><rect x="1" y="12" width="3" height="1" fill="#c8c8c8"/><rect x="4" y="12" width="1" height="1" fill="#000"/><rect x="5" y="12" width="2" height="1" fill="#c8c8c8"/><rect x="7" y="12" width="1" height="1" fill="#000"/><rect x="8" y="12" width="2" height="1" fill="#909090"/><rect x="10" y="12" width="1" height="1" fill="#000"/><rect x="11" y="12" width="1" height="1" fill="#c8c8c8"/><rect x="12" y="12" width="1" height="1" fill="#000"/><rect x="13" y="12" width="1" height="1" fill="#c8c8c8"/><rect x="14" y="12" width="1" height="1" fill="#000"/><rect x="0" y="13" width="1" height="1" fill="#000"/><rect x="1" y="13" width="3" height="1" fill="#c8c8c8"/><rect x="4" y="13" width="1" height="1" fill="#000"/><rect x="5" y="13" width="2" height="1" fill="#c8c8c8"/><rect x="7" y="13" width="1" height="1" fill="#000"/><rect x="8" y="13" width="2" height="1" fill="#909090"/><rect x="10" y="13" width="1" height="1" fill="#000"/><rect x="11" y="13" width="1" height="1" fill="#c8c8c8"/><rect x="12" y="13" width="1" height="1" fill="#000"/><rect x="13" y="13" width="1" height="1" fill="#c8c8c8"/><rect x="14" y="13" width="1" height="1" fill="#000"/><rect x="0" y="14" width="15" height="1" fill="#000"/></svg>
<svg class="a" style="left:679px;top:38px;" width="15" height="15" viewBox="0 0 15 15" shape-rendering="crispEdges"><rect x="9" y="0" width="4" height="1" fill="#000090"/><rect x="9" y="1" width="1" height="1" fill="#000090"/><rect x="10" y="1" width="2" height="1" fill="#fff"/><rect x="12" y="1" width="1" height="1" fill="#000090"/><rect x="9" y="2" width="4" height="1" fill="#000090"/><rect x="10" y="4" width="5" height="1" fill="#000"/><rect x="6" y="5" width="2" height="1" fill="#000"/><rect x="10" y="5" width="1" height="1" fill="#000"/><rect x="11" y="5" width="3" height="1" fill="#909090"/><rect x="14" y="5" width="1" height="1" fill="#000"/><rect x="6" y="6" width="3" height="1" fill="#000"/><rect x="10" y="6" width="1" height="1" fill="#000"/><rect x="11" y="6" width="3" height="1" fill="#909090"/><rect x="14" y="6" width="1" height="1" fill="#000"/><rect x="7" y="7" width="5" height="1" fill="#000"/><rect x="12" y="7" width="2" height="1" fill="#909090"/><rect x="14" y="7" width="1" height="1" fill="#000"/><rect x="5" y="8" width="6" height="1" fill="#000"/><rect x="11" y="8" width="3" height="1" fill="#909090"/><rect x="14" y="8" width="1" height="1" fill="#000"/><rect x="1" y="9" width="2" height="1" fill="#000"/><rect x="4" y="9" width="1" height="1" fill="#000"/><rect x="7" y="9" width="2" height="1" fill="#000"/><rect x="10" y="9" width="1" height="1" fill="#000"/><rect x="11" y="9" width="3" height="1" fill="#909090"/><rect x="14" y="9" width="1" height="1" fill="#000"/><rect x="7" y="10" width="3" height="1" fill="#000"/><rect x="10" y="10" width="2" height="1" fill="#909090"/><rect x="12" y="10" width="1" height="1" fill="#fff"/><rect x="13" y="10" width="1" height="1" fill="#909090"/><rect x="14" y="10" width="1" height="1" fill="#000"/><rect x="8" y="11" width="1" height="1" fill="#000"/><rect x="10" y="11" width="1" height="1" fill="#000"/><rect x="11" y="11" width="3" height="1" fill="#909090"/><rect x="14" y="11" width="1" height="1" fill="#000"/><rect x="1" y="12" width="1" height="1" fill="#000"/><rect x="3" y="12" width="5" height="1" fill="#000"/><rect x="10" y="12" width="1" height="1" fill="#000"/><rect x="11" y="12" width="3" height="1" fill="#909090"/><rect x="14" y="12" width="1" height="1" fill="#000"/><rect x="8" y="13" width="1" height="1" fill="#000"/><rect x="10" y="13" width="1" height="1" fill="#000"/><rect x="11" y="13" width="3" height="1" fill="#909090"/><rect x="14" y="13" width="1" height="1" fill="#000"/><rect x="8" y="14" width="1" height="1" fill="#000"/><rect x="10" y="14" width="1" height="1" fill="#000"/><rect x="11" y="14" width="3" height="1" fill="#909090"/><rect x="14" y="14" width="1" height="1" fill="#000"/></svg>
<div class="t" style="left:35px;top:39px">前单<span class="u">L</span></div>
<div class="t" style="left:104px;top:39px">后单<span class="u">N</span></div>
<div class="t" style="left:172px;top:39px">功能<span class="u">O</span></div>
<div class="t" style="left:236px;top:39px">打印<span class="u">P</span></div>
<div class="t" style="left:484px;top:39px">审核<span class="u">C</span></div>
<div class="t" style="left:557px;top:39px">新增<span class="u">A</span></div>
<div class="t" style="left:628px;top:39px">保存<span class="u">S</span></div>
<div class="t" style="left:700px;top:39px">返回<span class="u">R</span></div>
<div class="t" style="left:14px;top:63px;font-size:24px;line-height:28px;-webkit-text-stroke:0.6px #000">出库单</div>
<div class="t" style="left:302px;top:72px;">单据日期</div>
<div class="box" style="left:362px;top:67px;width:115px;height:23px"></div>
<div class="t" style="left:364px;top:72px;letter-spacing:0.4px">2017-09-20</div>
<svg class="a" style="left:450px;top:72px;" width="11" height="12" viewBox="0 0 11 12" shape-rendering="crispEdges"><rect x="1" y="0" width="9" height="1" fill="#6e6262"/><rect x="0" y="1" width="1" height="1" fill="#6e6262"/><rect x="1" y="1" width="9" height="1" fill="#f4f6fa"/><rect x="10" y="1" width="1" height="1" fill="#6e6262"/><rect x="0" y="2" width="1" height="1" fill="#6e6262"/><rect x="1" y="2" width="9" height="1" fill="#f4f6fa"/><rect x="10" y="2" width="1" height="1" fill="#6e6262"/><rect x="0" y="3" width="1" height="1" fill="#6e6262"/><rect x="1" y="3" width="1" height="1" fill="#f4f6fa"/><rect x="2" y="3" width="7" height="1" fill="#b4b8c4"/><rect x="9" y="3" width="1" height="1" fill="#f4f6fa"/><rect x="10" y="3" width="1" height="1" fill="#6e6262"/><rect x="0" y="4" width="1" height="1" fill="#6e6262"/><rect x="1" y="4" width="1" height="1" fill="#f4f6fa"/><rect x="2" y="4" width="1" height="1" fill="#b4b8c4"/><rect x="3" y="4" width="1" height="1" fill="#f4f6fa"/><rect x="4" y="4" width="1" height="1" fill="#b4b8c4"/><rect x="5" y="4" width="1" height="1" fill="#f4f6fa"/><rect x="6" y="4" width="1" height="1" fill="#b4b8c4"/><rect x="7" y="4" width="1" height="1" fill="#f4f6fa"/><rect x="8" y="4" width="1" height="1" fill="#b4b8c4"/><rect x="9" y="4" width="1" height="1" fill="#f4f6fa"/><rect x="10" y="4" width="1" height="1" fill="#6e6262"/><rect x="0" y="5" width="1" height="1" fill="#6e6262"/><rect x="1" y="5" width="1" height="1" fill="#f4f6fa"/><rect x="2" y="5" width="7" height="1" fill="#b4b8c4"/><rect x="9" y="5" width="1" height="1" fill="#f4f6fa"/><rect x="10" y="5" width="1" height="1" fill="#6e6262"/><rect x="0" y="6" width="1" height="1" fill="#6e6262"/><rect x="1" y="6" width="1" height="1" fill="#f4f6fa"/><rect x="2" y="6" width="1" height="1" fill="#b4b8c4"/><rect x="3" y="6" width="1" height="1" fill="#f4f6fa"/><rect x="4" y="6" width="1" height="1" fill="#b4b8c4"/><rect x="5" y="6" width="1" height="1" fill="#f4f6fa"/><rect x="6" y="6" width="1" height="1" fill="#b4b8c4"/><rect x="7" y="6" width="1" height="1" fill="#f4f6fa"/><rect x="8" y="6" width="1" height="1" fill="#b4b8c4"/><rect x="9" y="6" width="1" height="1" fill="#f4f6fa"/><rect x="10" y="6" width="1" height="1" fill="#6e6262"/><rect x="0" y="7" width="1" height="1" fill="#6e6262"/><rect x="1" y="7" width="1" height="1" fill="#f4f6fa"/><rect x="2" y="7" width="7" height="1" fill="#b4b8c4"/><rect x="9" y="7" width="1" height="1" fill="#f4f6fa"/><rect x="10" y="7" width="1" height="1" fill="#6e6262"/><rect x="0" y="8" width="1" height="1" fill="#6e6262"/><rect x="1" y="8" width="1" height="1" fill="#f4f6fa"/><rect x="2" y="8" width="1" height="1" fill="#b4b8c4"/><rect x="3" y="8" width="1" height="1" fill="#f4f6fa"/><rect x="4" y="8" width="1" height="1" fill="#b4b8c4"/><rect x="5" y="8" width="1" height="1" fill="#f4f6fa"/><rect x="6" y="8" width="1" height="1" fill="#b4b8c4"/><rect x="7" y="8" width="1" height="1" fill="#f4f6fa"/><rect x="8" y="8" width="1" height="1" fill="#b4b8c4"/><rect x="9" y="8" width="2" height="1" fill="#6e6262"/><rect x="0" y="9" width="1" height="1" fill="#6e6262"/><rect x="1" y="9" width="1" height="1" fill="#f4f6fa"/><rect x="2" y="9" width="6" height="1" fill="#b4b8c4"/><rect x="8" y="9" width="2" height="1" fill="#6e6262"/><rect x="0" y="10" width="1" height="1" fill="#6e6262"/><rect x="1" y="10" width="7" height="1" fill="#f4f6fa"/><rect x="8" y="10" width="1" height="1" fill="#6e6262"/><rect x="1" y="11" width="7" height="1" fill="#6e6262"/></svg>
<svg class="a" style="left:463px;top:76px;" width="7" height="4" viewBox="0 0 7 4" shape-rendering="crispEdges"><g fill="#3a5080"><rect x="0" y="0" width="7" height="1"/><rect x="1" y="1" width="5" height="1"/><rect x="2" y="2" width="3" height="1"/><rect x="3" y="3" width="1" height="1"/></g></svg>
<div class="t" style="left:517px;top:72px;">单据编号</div>
<div class="box" style="left:587px;top:67px;width:142px;height:23px"></div>
<div class="t" style="left:590px;top:72px;letter-spacing:0.22px">GB-2017-09-20-0009</div>
<div class="t" style="left:10px;top:109px;">出库仓库</div>
<div class="box" style="left:73px;top:104px;width:145px;height:23px"></div>
<div class="inner" style="left:75px;top:107px;width:123px;height:17px"></div>
<svg class="a" style="left:206px;top:114px;" width="7" height="4" viewBox="0 0 7 4" shape-rendering="crispEdges"><rect x="0" y="0" width="7" height="1"/><rect x="1" y="1" width="5" height="1"/><rect x="2" y="2" width="3" height="1"/><rect x="3" y="3" width="1" height="1"/></svg>
<div class="t" style="left:75px;top:109px;">仓库</div>
<svg class="a" style="left:222px;top:111px;" width="16" height="8" viewBox="0 0 16 8" shape-rendering="crispEdges"><rect x="0" y="0" width="2" height="1" fill="#000"/><rect x="5" y="0" width="8" height="1" fill="#000"/><rect x="0" y="1" width="5" height="1" fill="#000"/><rect x="5" y="1" width="5" height="1" fill="#fff"/><rect x="10" y="1" width="3" height="1" fill="#000"/><rect x="13" y="1" width="1" height="1" fill="#fff"/><rect x="14" y="1" width="1" height="1" fill="#000"/><rect x="0" y="2" width="2" height="1" fill="#000"/><rect x="2" y="2" width="1" height="1" fill="#00e0f0"/><rect x="3" y="2" width="1" height="1" fill="#000"/><rect x="4" y="2" width="3" height="1" fill="#fff"/><rect x="7" y="2" width="1" height="1" fill="#000"/><rect x="8" y="2" width="7" height="1" fill="#fff"/><rect x="15" y="2" width="1" height="1" fill="#000"/><rect x="0" y="3" width="2" height="1" fill="#000"/><rect x="2" y="3" width="1" height="1" fill="#00e0f0"/><rect x="3" y="3" width="1" height="1" fill="#000"/><rect x="4" y="3" width="6" height="1" fill="#fff"/><rect x="10" y="3" width="5" height="1" fill="#000"/><rect x="0" y="4" width="2" height="1" fill="#000"/><rect x="2" y="4" width="1" height="1" fill="#e0b0b0"/><rect x="3" y="4" width="1" height="1" fill="#000"/><rect x="4" y="4" width="3" height="1" fill="#fff"/><rect x="7" y="4" width="1" height="1" fill="#000"/><rect x="8" y="4" width="4" height="1" fill="#fff"/><rect x="12" y="4" width="1" height="1" fill="#000"/><rect x="0" y="5" width="2" height="1" fill="#000"/><rect x="2" y="5" width="1" height="1" fill="#e0b0b0"/><rect x="3" y="5" width="1" height="1" fill="#000"/><rect x="4" y="5" width="5" height="1" fill="#fff"/><rect x="9" y="5" width="4" height="1" fill="#000"/><rect x="0" y="6" width="2" height="1" fill="#000"/><rect x="3" y="6" width="1" height="1" fill="#000"/><rect x="4" y="6" width="2" height="1" fill="#fff"/><rect x="6" y="6" width="1" height="1" fill="#000"/><rect x="7" y="6" width="2" height="1" fill="#fff"/><rect x="9" y="6" width="2" height="1" fill="#000"/><rect x="0" y="7" width="2" height="1" fill="#000"/><rect x="4" y="7" width="6" height="1" fill="#000"/></svg>
<div class="t" style="left:268px;top:109px;">客</div>
<div class="t" style="left:283px;top:109px;">户</div>
<div class="box" style="left:322px;top:104px;width:145px;height:23px"></div>
<div class="inner" style="left:324px;top:107px;width:123px;height:17px"></div>
<svg class="a" style="left:454px;top:114px;" width="7" height="4" viewBox="0 0 7 4" shape-rendering="crispEdges"><rect x="0" y="0" width="7" height="1"/><rect x="1" y="1" width="5" height="1"/><rect x="2" y="2" width="3" height="1"/><rect x="3" y="3" width="1" height="1"/></svg>
<svg class="a" style="left:471px;top:111px;" width="16" height="8" viewBox="0 0 16 8" shape-rendering="crispEdges"><rect x="0" y="0" width="2" height="1" fill="#000"/><rect x="5" y="0" width="8" height="1" fill="#000"/><rect x="0" y="1" width="5" height="1" fill="#000"/><rect x="5" y="1" width="5" height="1" fill="#fff"/><rect x="10" y="1" width="3" height="1" fill="#000"/><rect x="13" y="1" width="1" height="1" fill="#fff"/><rect x="14" y="1" width="1" height="1" fill="#000"/><rect x="0" y="2" width="2" height="1" fill="#000"/><rect x="2" y="2" width="1" height="1" fill="#00e0f0"/><rect x="3" y="2" width="1" height="1" fill="#000"/><rect x="4" y="2" width="3" height="1" fill="#fff"/><rect x="7" y="2" width="1" height="1" fill="#000"/><rect x="8" y="2" width="7" height="1" fill="#fff"/><rect x="15" y="2" width="1" height="1" fill="#000"/><rect x="0" y="3" width="2" height="1" fill="#000"/><rect x="2" y="3" width="1" height="1" fill="#00e0f0"/><rect x="3" y="3" width="1" height="1" fill="#000"/><rect x="4" y="3" width="6" height="1" fill="#fff"/><rect x="10" y="3" width="5" height="1" fill="#000"/><rect x="0" y="4" width="2" height="1" fill="#000"/><rect x="2" y="4" width="1" height="1" fill="#e0b0b0"/><rect x="3" y="4" width="1" height="1" fill="#000"/><rect x="4" y="4" width="3" height="1" fill="#fff"/><rect x="7" y="4" width="1" height="1" fill="#000"/><rect x="8" y="4" width="4" height="1" fill="#fff"/><rect x="12" y="4" width="1" height="1" fill="#000"/><rect x="0" y="5" width="2" height="1" fill="#000"/><rect x="2" y="5" width="1" height="1" fill="#e0b0b0"/><rect x="3" y="5" width="1" height="1" fill="#000"/><rect x="4" y="5" width="5" height="1" fill="#fff"/><rect x="9" y="5" width="4" height="1" fill="#000"/><rect x="0" y="6" width="2" height="1" fill="#000"/><rect x="3" y="6" width="1" height="1" fill="#000"/><rect x="4" y="6" width="2" height="1" fill="#fff"/><rect x="6" y="6" width="1" height="1" fill="#000"/><rect x="7" y="6" width="2" height="1" fill="#fff"/><rect x="9" y="6" width="2" height="1" fill="#000"/><rect x="0" y="7" width="2" height="1" fill="#000"/><rect x="4" y="7" width="6" height="1" fill="#000"/></svg>
<div class="t" style="left:517px;top:109px;">联系人</div>
<div class="box" style="left:571px;top:104px;width:145px;height:23px"></div>
<svg class="a" style="left:704px;top:114px;" width="7" height="4" viewBox="0 0 7 4" shape-rendering="crispEdges"><rect x="0" y="0" width="7" height="1"/><rect x="1" y="1" width="5" height="1"/><rect x="2" y="2" width="3" height="1"/><rect x="3" y="3" width="1" height="1"/></svg>
<div class="t" style="left:758px;top:109px;">联系电话</div>
<div class="box" style="left:820px;top:104px;width:145px;height:23px"></div>
<svg class="a" style="left:952px;top:114px;" width="7" height="4" viewBox="0 0 7 4" shape-rendering="crispEdges"><rect x="0" y="0" width="7" height="1"/><rect x="1" y="1" width="5" height="1"/><rect x="2" y="2" width="3" height="1"/><rect x="3" y="3" width="1" height="1"/></svg>
<svg class="a" style="left:962px;top:102px" width="28" height="26" viewBox="962 102 28 26"><path d="M979,122.5 L983,122.5 L984.5,120.5" fill="none" stroke="#707070" stroke-width="1.2"/><path d="M971,108.5 Q968.5,116 977.5,121.5" fill="none" stroke="#8a7a20" stroke-width="4.6" stroke-linecap="round"/><path d="M971,108.5 Q968.5,116 977.5,121.5" fill="none" stroke="#f4dc20" stroke-width="3" stroke-linecap="round"/><rect x="968.5" y="107" width="5" height="4" rx="1" fill="#f0c020" stroke="#c06020" stroke-width="0.8"/><rect x="975" y="118.5" width="5" height="5" rx="1" transform="rotate(-35 977.5 121)" fill="#f4dc20" stroke="#9a8420" stroke-width="0.8"/></svg>
<div class="t" style="left:1007px;top:109px;">企业地址</div>
<div class="box" style="left:1069px;top:104px;width:145px;height:23px"></div>
<svg class="a" style="left:1201px;top:114px;" width="7" height="4" viewBox="0 0 7 4" shape-rendering="crispEdges"><rect x="0" y="0" width="7" height="1"/><rect x="1" y="1" width="5" height="1"/><rect x="2" y="2" width="3" height="1"/><rect x="3" y="3" width="1" height="1"/></svg>
<svg class="a" style="left:1218px;top:108px;" width="16" height="14" viewBox="0 0 16 14" shape-rendering="crispEdges"><rect x="5" y="0" width="4" height="1" fill="#909090"/><rect x="3" y="1" width="2" height="1" fill="#909090"/><rect x="7" y="1" width="2" height="1" fill="#0010e0"/><rect x="9" y="1" width="1" height="1" fill="#108030"/><rect x="10" y="1" width="3" height="1" fill="#0010e0"/><rect x="2" y="2" width="1" height="1" fill="#909090"/><rect x="6" y="2" width="1" height="1" fill="#108030"/><rect x="7" y="2" width="6" height="1" fill="#0010e0"/><rect x="1" y="3" width="1" height="1" fill="#909090"/><rect x="2" y="3" width="1" height="1" fill="#fff"/><rect x="3" y="3" width="1" height="1" fill="#208080"/><rect x="4" y="3" width="2" height="1" fill="#108030"/><rect x="7" y="3" width="6" height="1" fill="#fff"/><rect x="13" y="3" width="2" height="1" fill="#909090"/><rect x="1" y="4" width="1" height="1" fill="#909090"/><rect x="4" y="4" width="2" height="1" fill="#108030"/><rect x="7" y="4" width="1" height="1" fill="#fff"/><rect x="8" y="4" width="1" height="1" fill="#f0f000"/><rect x="9" y="4" width="1" height="1" fill="#fff"/><rect x="10" y="4" width="1" height="1" fill="#f0f000"/><rect x="11" y="4" width="2" height="1" fill="#fff"/><rect x="13" y="4" width="1" height="1" fill="#c8c8c8"/><rect x="14" y="4" width="1" height="1" fill="#909090"/><rect x="0" y="5" width="2" height="1" fill="#909090"/><rect x="2" y="5" width="1" height="1" fill="#0010e0"/><rect x="3" y="5" width="1" height="1" fill="#108030"/><rect x="4" y="5" width="2" height="1" fill="#0010e0"/><rect x="7" y="5" width="7" height="1" fill="#fff"/><rect x="14" y="5" width="1" height="1" fill="#909090"/><rect x="0" y="6" width="1" height="1" fill="#909090"/><rect x="4" y="6" width="1" height="1" fill="#0010e0"/><rect x="7" y="6" width="1" height="1" fill="#f0f000"/><rect x="8" y="6" width="1" height="1" fill="#fff"/><rect x="9" y="6" width="1" height="1" fill="#208080"/><rect x="10" y="6" width="1" height="1" fill="#108030"/><rect x="11" y="6" width="1" height="1" fill="#208080"/><rect x="12" y="6" width="2" height="1" fill="#fff"/><rect x="14" y="6" width="1" height="1" fill="#909090"/><rect x="0" y="7" width="1" height="1" fill="#909090"/><rect x="1" y="7" width="1" height="1" fill="#208080"/><rect x="4" y="7" width="2" height="1" fill="#909090"/><rect x="7" y="7" width="1" height="1" fill="#fff"/><rect x="8" y="7" width="1" height="1" fill="#208080"/><rect x="9" y="7" width="1" height="1" fill="#fff"/><rect x="10" y="7" width="2" height="1" fill="#108030"/><rect x="12" y="7" width="2" height="1" fill="#0010e0"/><rect x="14" y="7" width="1" height="1" fill="#909090"/><rect x="2" y="8" width="5" height="1" fill="#0010e0"/><rect x="7" y="8" width="1" height="1" fill="#fff"/><rect x="8" y="8" width="1" height="1" fill="#208080"/><rect x="9" y="8" width="1" height="1" fill="#0010e0"/><rect x="10" y="8" width="1" height="1" fill="#108030"/><rect x="11" y="8" width="3" height="1" fill="#0010e0"/><rect x="14" y="8" width="1" height="1" fill="#909090"/><rect x="2" y="9" width="5" height="1" fill="#0010e0"/><rect x="7" y="9" width="1" height="1" fill="#f0f000"/><rect x="8" y="9" width="6" height="1" fill="#0010e0"/><rect x="14" y="9" width="1" height="1" fill="#909090"/><rect x="3" y="10" width="4" height="1" fill="#0010e0"/><rect x="7" y="10" width="1" height="1" fill="#fff"/><rect x="8" y="10" width="1" height="1" fill="#f0f000"/><rect x="9" y="10" width="4" height="1" fill="#0010e0"/><rect x="13" y="10" width="1" height="1" fill="#fff"/><rect x="14" y="10" width="1" height="1" fill="#909090"/><rect x="4" y="11" width="3" height="1" fill="#0010e0"/><rect x="7" y="11" width="1" height="1" fill="#f0f000"/><rect x="8" y="11" width="2" height="1" fill="#fff"/><rect x="10" y="11" width="2" height="1" fill="#0010e0"/><rect x="12" y="11" width="2" height="1" fill="#fff"/><rect x="14" y="11" width="1" height="1" fill="#909090"/><rect x="5" y="12" width="2" height="1" fill="#0010e0"/><rect x="7" y="12" width="1" height="1" fill="#f0f000"/><rect x="8" y="12" width="2" height="1" fill="#fff"/><rect x="10" y="12" width="1" height="1" fill="#f0f000"/><rect x="11" y="12" width="1" height="1" fill="#fff"/><rect x="12" y="12" width="2" height="1" fill="#f0f000"/><rect x="14" y="12" width="1" height="1" fill="#909090"/><rect x="7" y="13" width="8" height="1" fill="#909090"/></svg>
<div class="t" style="left:10px;top:131px;">采购订单号</div>
<div class="a" style="left:73px;top:128px;width:143px;height:21px;background:#fff;border-top:1px solid #a0a0a0;border-left:1px solid #e0e0e0"></div>
<svg class="a" style="left:0;top:0" width="260" height="160" viewBox="0 0 260 160"><path d="M4,125.5 L12,124.6 L78,124.5 L85,122 L95,120.5 L101,119.5 L109,118.3 L134.5,118.2 L135.5,119.5 L173.5,119.5 L188,120.7 L196,122.8 L207,124.2 L219,126.5 L227,128.6 L234,134 L237.5,139 L236.5,142 L232,144.7 L227,146.4 L218,149.5 L12,149.3 L10,148.8 L4,141 L4,128" fill="none" stroke="#f01018" stroke-width="1" shape-rendering="crispEdges"/></svg>
<div class="a" style="left:1241px;top:153px;width:16px;height:315px;background:#efefef;border-left:1px solid #e2e2e2"></div>
<div class="a" style="left:1245px;top:160px;width:0;height:0;border-left:4px solid transparent;border-right:4px solid transparent;border-bottom:4px solid #404040"></div>
<div class="a" style="left:1241px;top:171px;width:15px;height:15px;border:1px solid #8a8a8a;border-radius:2px;background:linear-gradient(90deg,#f4f4f4 0%,#e6e6e6 48%,#d0d0d0 52%,#dadada 100%)"></div>
<div class="a" style="left:1245px;top:457px;width:0;height:0;border-left:4px solid transparent;border-right:4px solid transparent;border-top:4px solid #404040"></div>
<div class="t" style="left:12px;top:518px;">业务部门</div>
<div class="box" style="left:71px;top:513px;width:106px;height:22px"></div>
<div class="inner" style="left:73px;top:516px;width:84px;height:16px"></div>
<svg class="a" style="left:165px;top:523px;" width="7" height="4" viewBox="0 0 7 4" shape-rendering="crispEdges"><rect x="0" y="0" width="7" height="1"/><rect x="1" y="1" width="5" height="1"/><rect x="2" y="2" width="3" height="1"/><rect x="3" y="3" width="1" height="1"/></svg>
<div class="t" style="left:73px;top:518px;">销售部</div>
<div class="t" style="left:183px;top:518px;">业务员</div>
<div class="box" style="left:228px;top:513px;width:88px;height:22px"></div>
<div class="inner" style="left:230px;top:516px;width:66px;height:16px"></div>
<svg class="a" style="left:304px;top:523px;" width="7" height="4" viewBox="0 0 7 4" shape-rendering="crispEdges"><rect x="0" y="0" width="7" height="1"/><rect x="1" y="1" width="5" height="1"/><rect x="2" y="2" width="3" height="1"/><rect x="3" y="3" width="1" height="1"/></svg>
<div class="t" style="left:230px;top:518px;">胡红星</div>
<div class="t" style="left:322px;top:518px;color:#2040e0;font-weight:bold;font-size:11px;letter-spacing:0px">...</div>
<div class="t" style="left:353px;top:518px;">制单人</div>
<div class="t" style="left:420px;top:518px;color:#e00000">胡红财</div>
<div class="t" style="left:491px;top:518px;color:#108898;letter-spacing:0.35px">2017-09-23</div>
<div class="t" style="left:572px;top:518px;">审核员</div>
<div class="t" style="left:12px;top:544px;">备</div>
<div class="t" style="left:47px;top:544px;">注</div>
<div class="box" style="left:71px;top:539px;width:694px;height:22px;border-radius:0"></div>
<div class="a" style="left:747px;top:541px;width:16px;height:18px;background:linear-gradient(90deg,#f0f0f0,#e8e8e8)"></div>
<svg class="a" style="left:752px;top:546px;" width="7" height="4" viewBox="0 0 7 4" shape-rendering="crispEdges"><rect x="3" y="0" width="1" height="1" fill="#505050"/><rect x="2" y="1" width="3" height="1" fill="#686868"/><rect x="1" y="2" width="5" height="1" fill="#808080"/><rect x="0" y="3" width="7" height="1" fill="#a0a0a0"/></svg>
<svg class="a" style="left:752px;top:555px;" width="7" height="4" viewBox="0 0 7 4" shape-rendering="crispEdges"><rect x="0" y="0" width="7" height="1" fill="#606060"/><rect x="1" y="1" width="5" height="1" fill="#707070"/><rect x="2" y="2" width="3" height="1" fill="#888888"/><rect x="3" y="3" width="1" height="1" fill="#a0a0a0"/></svg>
<svg class="a" style="left:13px;top:567px;" width="13" height="16" viewBox="0 0 13 16" shape-rendering="crispEdges"><rect x="0" y="0" width="10" height="1" fill="#000"/><rect x="0" y="1" width="1" height="1" fill="#000"/><rect x="1" y="1" width="8" height="1" fill="#fff"/><rect x="9" y="1" width="2" height="1" fill="#000"/><rect x="0" y="2" width="1" height="1" fill="#000"/><rect x="1" y="2" width="8" height="1" fill="#fff"/><rect x="9" y="2" width="1" height="1" fill="#000"/><rect x="10" y="2" width="1" height="1" fill="#fff"/><rect x="11" y="2" width="1" height="1" fill="#000"/><rect x="0" y="3" width="1" height="1" fill="#000"/><rect x="1" y="3" width="5" height="1" fill="#fff"/><rect x="6" y="3" width="1" height="1" fill="#0a8a0a"/><rect x="7" y="3" width="3" height="1" fill="#fff"/><rect x="10" y="3" width="3" height="1" fill="#000"/><rect x="0" y="4" width="1" height="1" fill="#000"/><rect x="1" y="4" width="5" height="1" fill="#fff"/><rect x="6" y="4" width="2" height="1" fill="#0a8a0a"/><rect x="8" y="4" width="4" height="1" fill="#fff"/><rect x="12" y="4" width="1" height="1" fill="#000"/><rect x="0" y="5" width="1" height="1" fill="#000"/><rect x="1" y="5" width="2" height="1" fill="#fff"/><rect x="3" y="5" width="6" height="1" fill="#0a8a0a"/><rect x="9" y="5" width="3" height="1" fill="#fff"/><rect x="12" y="5" width="1" height="1" fill="#000"/><rect x="0" y="6" width="1" height="1" fill="#000"/><rect x="1" y="6" width="2" height="1" fill="#fff"/><rect x="3" y="6" width="1" height="1" fill="#0a8a0a"/><rect x="4" y="6" width="2" height="1" fill="#fff"/><rect x="6" y="6" width="2" height="1" fill="#0a8a0a"/><rect x="8" y="6" width="4" height="1" fill="#fff"/><rect x="12" y="6" width="1" height="1" fill="#000"/><rect x="0" y="7" width="1" height="1" fill="#000"/><rect x="1" y="7" width="2" height="1" fill="#fff"/><rect x="3" y="7" width="1" height="1" fill="#0a8a0a"/><rect x="4" y="7" width="2" height="1" fill="#fff"/><rect x="6" y="7" width="1" height="1" fill="#0a8a0a"/><rect x="7" y="7" width="5" height="1" fill="#fff"/><rect x="12" y="7" width="1" height="1" fill="#000"/><rect x="0" y="8" width="1" height="1" fill="#000"/><rect x="1" y="8" width="2" height="1" fill="#fff"/><rect x="3" y="8" width="1" height="1" fill="#0a8a0a"/><rect x="4" y="8" width="5" height="1" fill="#fff"/><rect x="9" y="8" width="1" height="1" fill="#0a8a0a"/><rect x="10" y="8" width="2" height="1" fill="#fff"/><rect x="12" y="8" width="1" height="1" fill="#000"/><rect x="0" y="9" width="1" height="1" fill="#000"/><rect x="1" y="9" width="5" height="1" fill="#fff"/><rect x="6" y="9" width="1" height="1" fill="#0a8a0a"/><rect x="7" y="9" width="2" height="1" fill="#fff"/><rect x="9" y="9" width="1" height="1" fill="#0a8a0a"/><rect x="10" y="9" width="2" height="1" fill="#fff"/><rect x="12" y="9" width="1" height="1" fill="#000"/><rect x="0" y="10" width="1" height="1" fill="#000"/><rect x="1" y="10" width="4" height="1" fill="#fff"/><rect x="5" y="10" width="2" height="1" fill="#0a8a0a"/><rect x="7" y="10" width="2" height="1" fill="#fff"/><rect x="9" y="10" width="1" height="1" fill="#0a8a0a"/><rect x="10" y="10" width="2" height="1" fill="#fff"/><rect x="12" y="10" width="1" height="1" fill="#000"/><rect x="0" y="11" width="1" height="1" fill="#000"/><rect x="1" y="11" width="3" height="1" fill="#fff"/><rect x="4" y="11" width="6" height="1" fill="#0a8a0a"/><rect x="10" y="11" width="2" height="1" fill="#fff"/><rect x="12" y="11" width="1" height="1" fill="#000"/><rect x="0" y="12" width="1" height="1" fill="#000"/><rect x="1" y="12" width="4" height="1" fill="#fff"/><rect x="5" y="12" width="2" height="1" fill="#0a8a0a"/><rect x="7" y="12" width="5" height="1" fill="#fff"/><rect x="12" y="12" width="1" height="1" fill="#000"/><rect x="0" y="13" width="1" height="1" fill="#000"/><rect x="1" y="13" width="5" height="1" fill="#fff"/><rect x="6" y="13" width="1" height="1" fill="#0a8a0a"/><rect x="7" y="13" width="5" height="1" fill="#fff"/><rect x="12" y="13" width="1" height="1" fill="#000"/><rect x="0" y="14" width="1" height="1" fill="#000"/><rect x="1" y="14" width="11" height="1" fill="#fff"/><rect x="12" y="14" width="1" height="1" fill="#000"/><rect x="0" y="15" width="13" height="1" fill="#000"/></svg>
<div class="t" style="left:34px;top:570px;color:#0000f0">业务信息</div>
<div class="t" style="left:88px;top:570px;color:#008000">库存-~</div>
<div class="t" style="left:153px;top:570px;">业务量</div>
<div class="t" style="left:8px;top:596px;">提示： 按F5键选择产品，F3键显示单据列表</div>
<svg class="a" style="left:0;top:0" width="26" height="28" viewBox="0 0 26 28"><path d="M12,13.5 H15 M13.5,13.5 V19.5 H15.5" fill="none" stroke="#8a8a8a" stroke-width="1" shape-rendering="crispEdges"/><polygon points="5,12.3 9.5,7.8 13,11.3 8.5,15.8" fill="#f0f000" stroke="#000" stroke-width="1"/><polygon points="15,14.4 18.4,11 21,13.5 17.5,16.8" fill="#c00060" stroke="#000" stroke-width="1"/><polygon points="14.2,21.2 17.3,18.2 20,20.7 16.6,23.8" fill="#00b8c0" stroke="#000" stroke-width="1"/></svg>
<div class="a" style="left:1169px;top:16px;width:11px;height:5px;border:1px solid #5a5a5a;border-radius:1px;background:#dcdcdc"></div>
<div class="a" style="left:1202px;top:12px;width:11px;height:9px;border:1px solid #4a4a4a;border-radius:1px;background:#f0f0f0;box-shadow:inset 0 0 0 2px #f0f0f0,inset 0 0 0 3px #606060"></div>
<svg class="a" style="left:1234px;top:11px" width="14" height="11" viewBox="0 0 14 11"><path d="M3,2 L11,9 M11,2 L3,9" stroke="#4a4a4a" stroke-width="3.8" stroke-linecap="round"/><path d="M3,2 L11,9 M11,2 L3,9" stroke="#f4f4f4" stroke-width="2" stroke-linecap="round"/></svg>
</body></html>
